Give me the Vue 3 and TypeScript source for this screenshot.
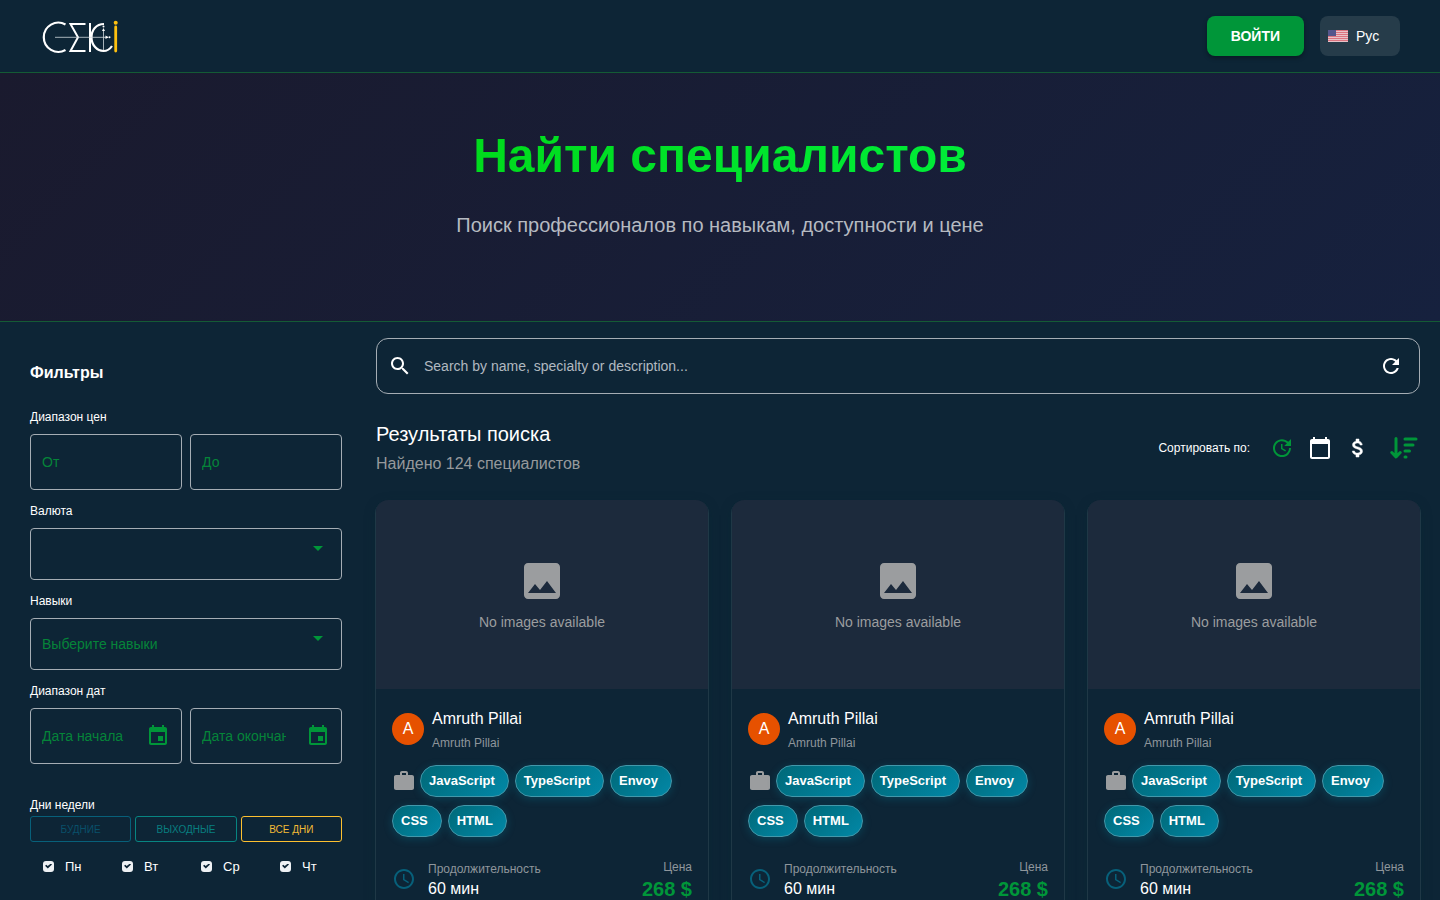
<script setup lang="ts">
import { ref } from 'vue'

interface Specialist {
  id: number
  name: string
  nick: string
  skills: string[]
  duration: string
  price: string
}

const skills = ['JavaScript', 'TypeScript', 'Envoy', 'CSS', 'HTML']
const specialists: Specialist[] = [1, 2, 3].map((id) => ({
  id,
  name: 'Amruth Pillai',
  nick: 'Amruth Pillai',
  skills,
  duration: '60 мин',
  price: '268 $',
}))

const days = ref(
  ['Пн', 'Вт', 'Ср', 'Чт', 'Пт', 'Сб', 'Вс'].map((name) => ({ name, on: true })),
)
const query = ref('')
const skill = ref('')
const currency = ref('')
const language = ref('ru')

function setDays(from: number, to: number) {
  days.value.forEach((day, i) => {
    day.on = i >= from && i <= to
  })
}
</script>

<template>
  <div class="page">
    <header class="topbar">
      <a href="#" class="logo" aria-label="CEKCi">
        <svg width="80" height="36" viewBox="40 18 80 36" fill="none">
          <g stroke="#fff" stroke-width="2.2">
            <path d="M65.500 24.500A14.600 14.600 0 1 0 65.500 50" />
            <path d="M85.500 24H70.500L78 37.300L70.500 51H85.500" stroke-width="2" />
            <path d="M90 23V52" stroke-width="2" />
            <path d="M104 24C96 24 91.500 30 91.500 37.500S97 51 103.500 51C107 51 110 49 112 46" />
          </g>
          <path d="M55 37.300H108M103.500 31V50" stroke="#cfd8dc" stroke-width=".8" />
          <path d="M102 31l1.500-3 1.500 3zM105.500 35.500l3 1.800-3 1.800z" fill="#fff" />
          <circle cx="103.500" cy="26.500" r="1" fill="#fff" />
          <circle cx="109.500" cy="37.300" r="1" fill="#fff" />
          <path d="M115.700 27V51" stroke="#fdc010" stroke-width="2.800" stroke-linecap="round" />
          <circle cx="115.700" cy="22.800" r="2" fill="#fdc010" />
        </svg>
      </a>
      <div class="topbar-actions">
        <button type="button" class="login">ВОЙТИ</button>
        <div class="language">
          <svg class="flag" width="20" height="12" viewBox="0 0 20 12" aria-hidden="true">
            <rect width="20" height="12" fill="#e9c3c9" />
            <path d="M0 .5h20M0 2.500h20M0 4.500h20M0 6.500h20M0 8.500h20M0 10.500h20" stroke="#dc7480" />
            <rect width="8" height="6" fill="#55568c" />
          </svg>
          <select v-model="language" aria-label="Язык">
            <option value="ru">Рус</option>
            <option value="en">Eng</option>
          </select>
        </div>
      </div>
    </header>

    <section class="hero">
      <h1>Найти специалистов</h1>
      <p>Поиск профессионалов по навыкам, доступности и цене</p>
    </section>

    <div class="content">
      <aside class="filters">
        <h2>Фильтры</h2>

        <label class="caption" for="price-from">Диапазон цен</label>
        <div class="pair">
          <div class="field"><input id="price-from" type="text" placeholder="От" /></div>
          <div class="field"><input type="text" placeholder="До" aria-label="Цена до" /></div>
        </div>

        <label class="caption" for="currency">Валюта</label>
        <div class="field select-field">
          <select id="currency" v-model="currency">
            <option value=""></option>
            <option value="usd">USD</option>
          </select>
          <svg class="caret" width="10" height="5" viewBox="0 0 10 5"><path d="M0 0h10L5 5z" /></svg>
        </div>

        <label class="caption" for="skills">Навыки</label>
        <div class="field select-field">
          <select id="skills" v-model="skill">
            <option value="">Выберите навыки</option>
            <option v-for="s in skills" :key="s" :value="s">{{ s }}</option>
          </select>
          <svg class="caret" width="10" height="5" viewBox="0 0 10 5"><path d="M0 0h10L5 5z" /></svg>
        </div>

        <label class="caption" for="date-from">Диапазон дат</label>
        <div class="pair">
          <div class="field date-field">
            <input id="date-from" type="text" placeholder="Дата начала" />
            <button type="button" class="icon-button" aria-label="Выбрать дату начала">
              <svg width="24" height="24" viewBox="0 0 24 24"><path d="M17 12h-5v5h5v-5zM16 1v2H8V1H6v2H5c-1.110 0-1.990.9-1.990 2L3 19c0 1.100.89 2 2 2h14c1.100 0 2-.9 2-2V5c0-1.100-.9-2-2-2h-1V1h-2zm3 18H5V8h14v11z" /></svg>
            </button>
          </div>
          <div class="field date-field">
            <input type="text" placeholder="Дата окончания" aria-label="Дата окончания" />
            <button type="button" class="icon-button" aria-label="Выбрать дату окончания">
              <svg width="24" height="24" viewBox="0 0 24 24"><path d="M17 12h-5v5h5v-5zM16 1v2H8V1H6v2H5c-1.110 0-1.990.9-1.990 2L3 19c0 1.100.89 2 2 2h14c1.100 0 2-.9 2-2V5c0-1.100-.9-2-2-2h-1V1h-2zm3 18H5V8h14v11z" /></svg>
            </button>
          </div>
        </div>

        <div class="days-title">Дни недели</div>
        <div class="day-presets">
          <button type="button" class="preset weekdays" @click="setDays(0, 4)">БУДНИЕ</button>
          <button type="button" class="preset weekend" @click="setDays(5, 6)">ВЫХОДНЫЕ</button>
          <button type="button" class="preset all" @click="setDays(0, 6)">ВСЕ ДНИ</button>
        </div>
        <div class="days">
          <label v-for="day in days" :key="day.name" class="day">
            <input v-model="day.on" type="checkbox" />
            <span>{{ day.name }}</span>
          </label>
        </div>
      </aside>

      <main class="results">
        <div class="search">
          <svg width="24" height="24" viewBox="0 0 24 24" aria-hidden="true"><path d="M15.500 14h-.79l-.28-.27C15.410 12.590 16 11.110 16 9.500 16 5.910 13.090 3 9.500 3S3 5.910 3 9.500 5.910 16 9.500 16c1.610 0 3.090-.59 4.230-1.570l.27.28v.79l5 4.990L20.490 19l-4.990-5zm-6 0C7.010 14 5 11.990 5 9.500S7.010 5 9.500 5 14 7.010 14 9.500 11.990 14 9.500 14z" /></svg>
          <input v-model="query" type="text" placeholder="Search by name, specialty or description..." aria-label="Search" />
          <button type="button" class="icon-button" aria-label="Обновить">
            <svg width="24" height="24" viewBox="0 0 24 24"><path d="M17.650 6.350C16.200 4.900 14.210 4 12 4c-4.420 0-7.990 3.580-7.990 8s3.570 8 7.990 8c3.730 0 6.840-2.550 7.730-6h-2.080c-.82 2.330-3.040 4-5.650 4-3.310 0-6-2.690-6-6s2.690-6 6-6c1.660 0 3.140.69 4.220 1.780L13 11h7V4l-2.350 2.350z" /></svg>
          </button>
        </div>

        <div class="results-head">
          <div>
            <h2>Результаты поиска</h2>
            <p>Найдено 124 специалистов</p>
          </div>
          <div class="sort">
            <span>Сортировать по:</span>
            <div class="sort-icons">
              <button type="button" class="icon-button green" aria-label="По обновлению">
                <svg width="24" height="24" viewBox="0 0 24 24"><path d="M21 10.120h-6.780l2.740-2.820c-2.730-2.700-7.150-2.800-9.880-.1-2.730 2.710-2.730 7.080 0 9.790s7.150 2.710 9.880 0C18.320 15.650 19 14.080 19 12.100h2c0 1.980-.88 4.550-2.640 6.290-3.510 3.480-9.210 3.480-12.720 0-3.500-3.470-3.530-9.110-.02-12.580s9.140-3.470 12.650 0L21 3v7.120zM12.500 8v4.250l3.500 2.080-.72 1.210L11 13V8h1.500z" /></svg>
              </button>
              <button type="button" class="icon-button" aria-label="По дате">
                <svg width="24" height="24" viewBox="0 0 24 24"><path d="M20 3h-1V1h-2v2H7V1H5v2H4c-1.100 0-2 .9-2 2v16c0 1.100.9 2 2 2h16c1.100 0 2-.9 2-2V5c0-1.100-.9-2-2-2zm0 18H4V8h16v13z" /></svg>
              </button>
              <button type="button" class="icon-button bold" aria-label="По цене">
                <svg width="24" height="24" viewBox="0 0 24 24"><path d="M11.800 10.900c-2.270-.59-3-1.200-3-2.150 0-1.090 1.010-1.850 2.700-1.850 1.780 0 2.440.85 2.500 2.100h2.210c-.07-1.720-1.120-3.300-3.210-3.810V3h-3v2.160c-1.940.42-3.500 1.680-3.500 3.610 0 2.310 1.910 3.460 4.700 4.130 2.500.6 3 1.480 3 2.410 0 .69-.49 1.790-2.700 1.790-2.060 0-2.870-.92-2.980-2.100h-2.200c.12 2.190 1.760 3.420 3.680 3.830V21h3v-2.150c1.950-.37 3.500-1.500 3.500-3.550 0-2.840-2.430-3.810-4.700-4.400z" /></svg>
              </button>
            </div>
            <button type="button" class="icon-button green" aria-label="Порядок сортировки">
              <svg class="sort-order" width="28" height="24" viewBox="0 0 28 24">
                <path d="M6 2.500V20M1.800 16.500L6 21l4.200-4.500M15 3h11M15 9h8M15 15h4.500M15 21h1" />
              </svg>
            </button>
          </div>
        </div>

        <div class="cards">
          <article v-for="person in specialists" :key="person.id" class="card">
            <div class="photo">
              <svg width="48" height="48" viewBox="0 0 24 24" aria-hidden="true"><path d="M21 19V5c0-1.100-.9-2-2-2H5c-1.100 0-2 .9-2 2v14c0 1.100.9 2 2 2h14c1.100 0 2-.9 2-2zM8.500 13.500l2.500 3.010L14.500 12l4.500 6H5l3.500-4.500z" /></svg>
              <span>No images available</span>
            </div>
            <div class="card-body">
              <div class="person">
                <div class="avatar">A</div>
                <div>
                  <h3>{{ person.name }}</h3>
                  <p>{{ person.nick }}</p>
                </div>
              </div>
              <div class="skills">
                <svg width="24" height="24" viewBox="0 0 24 24" aria-hidden="true"><path d="M20 6h-4V4c0-1.110-.89-2-2-2h-4c-1.110 0-2 .89-2 2v2H4c-1.110 0-1.990.89-1.990 2L2 19c0 1.110.89 2 2 2h16c1.110 0 2-.89 2-2V8c0-1.110-.89-2-2-2zm-6 0h-4V4h4v2z" /></svg>
                <span v-for="s in person.skills" :key="s" class="chip">{{ s }}</span>
              </div>
              <div class="terms">
                <svg width="24" height="24" viewBox="0 0 24 24" aria-hidden="true"><path d="M11.990 2C6.470 2 2 6.480 2 12s4.470 10 9.990 10C17.520 22 22 17.520 22 12S17.520 2 11.990 2zM12 20c-4.420 0-8-3.580-8-8s3.580-8 8-8 8 3.580 8 8-3.580 8-8 8zm.5-13H11v6l5.250 3.150.75-1.230-4.500-2.670z" /></svg>
                <div class="duration">
                  <span>Продолжительность</span>
                  <b>{{ person.duration }}</b>
                </div>
                <div class="price">
                  <span>Цена</span>
                  <b>{{ person.price }}</b>
                </div>
              </div>
            </div>
          </article>
        </div>
      </main>
    </div>
  </div>
</template>

<style>
html {
  background: #0d2536;
  scrollbar-width: none;
}

body {
  margin: 0;
}
</style>

<style scoped>
.page {
  min-height: 100vh;
  background: #0d2536;
  color: #fff;
  font-family: "Liberation Sans", Arial, sans-serif;
  font-size: 14px;
}

.page *,
.page *::before {
  box-sizing: border-box;
}

h1,
h2,
h3,
p {
  margin: 0;
}

button,
input,
select {
  font-family: inherit;
  color: inherit;
}

svg {
  flex: none;
  display: block;
  fill: currentColor;
}

.topbar {
  display: flex;
  align-items: center;
  justify-content: space-between;
  height: 73px;
  padding: 0 40px;
  border-bottom: 1px solid #145b35;
}

.logo svg {
  fill: none;
}

.topbar-actions {
  display: flex;
  gap: 16px;
}

.login {
  height: 40px;
  padding: 0 24px;
  border: 0;
  border-radius: 8px;
  background: #009639;
  box-shadow: 0 2px 4px rgba(0, 0, 0, 0.35);
  font-size: 14px;
  font-weight: 700;
}

.language {
  position: relative;
  width: 80px;
}

.language select {
  appearance: none;
  width: 100%;
  height: 40px;
  padding: 0 8px 0 36px;
  border: 0;
  border-radius: 8px;
  background: #263c4a;
  font-size: 14px;
}

.flag {
  position: absolute;
  top: 14px;
  left: 8px;
  pointer-events: none;
}

.hero {
  height: 249px;
  padding-top: 55px;
  border-bottom: 1px solid #145b35;
  background: linear-gradient(135deg, #1a1a2e 0%, #16213e 100%) padding-box;
  text-align: center;
}

.hero h1 {
  background: linear-gradient(135deg, #00c800 0%, #00ff55 100%);
  background-clip: text;
  color: transparent;
  font-size: 48px;
  line-height: 56px;
}

.hero p {
  margin-top: 24px;
  color: #b6bac1;
  font-size: 20px;
  line-height: 34px;
}

.content {
  display: grid;
  grid-template-columns: 332px minmax(0, 1fr);
  gap: 24px;
  padding: 16px 20px 24px;
}

.filters {
  padding: 22px 10px;
}

.filters h2 {
  margin-bottom: 22px;
  font-size: 16px;
  line-height: 26px;
}

.caption {
  display: block;
  margin: 12px 0 8px;
  font-size: 12px;
  line-height: 18px;
}

.pair {
  display: grid;
  grid-template-columns: repeat(2, minmax(0, 1fr));
  gap: 8px;
}

.field {
  position: relative;
  display: flex;
  align-items: center;
  height: 56px;
  padding: 0 11px;
  border: 1px solid #a5adb4;
  border-radius: 4px;
  color: #009639;
}

.date-field {
  gap: 20px;
}

.field input,
.field select {
  flex: 1;
  min-width: 0;
  height: 100%;
  padding: 0;
  border: 0;
  outline: 0;
  background: none;
  font-size: 14px;
}

.field input::placeholder {
  color: #058439;
  opacity: 1;
}

.select-field {
  height: 52px;
}

.select-field select {
  appearance: none;
  color: #058439;
}

.caret {
  position: absolute;
  top: 17px;
  right: 18px;
  pointer-events: none;
}

.icon-button {
  display: flex;
  flex: none;
  padding: 0;
  border: 0;
  background: none;
}

.bold svg {
  stroke: currentColor;
  stroke-width: 0.5;
}

.green {
  color: #009639;
}

.days-title {
  margin: 32px 0 2px;
  font-size: 12px;
  line-height: 18px;
}

.day-presets {
  display: grid;
  grid-template-columns: repeat(3, 1fr);
  gap: 4px;
}

.preset {
  height: 26px;
  padding: 0;
  border: 1px solid;
  border-radius: 3px;
  background: none;
  font-size: 10px;
}

.weekdays {
  border-color: #07607a;
  color: #09506a;
}

.weekend {
  border-color: #078582;
  color: #087f80;
}

.all {
  border-color: #fdc030;
  color: #f3bb35;
}

.days {
  display: grid;
  grid-template-columns: repeat(4, 1fr);
  gap: 15px 4px;
  margin-top: 12px;
}

.day {
  display: flex;
  align-items: center;
  gap: 11px;
  height: 24px;
  padding-left: 13px;
  font-size: 13px;
}

.day input {
  appearance: none;
  display: grid;
  place-items: center;
  width: 11px;
  height: 11px;
  margin: 0;
  border-radius: 3px;
  background: #eef1f4;
}

.day input:checked::before {
  content: "";
  width: 7px;
  height: 5px;
  background: #0d2536;
  clip-path: polygon(0 45%, 20% 25%, 38% 50%, 85% 0, 100% 20%, 40% 100%);
}

.search {
  display: flex;
  align-items: center;
  gap: 12px;
  height: 56px;
  padding: 0 16px 0 11px;
  border: 1px solid #a5adb4;
  border-radius: 12px;
}

.search input {
  flex: 1;
  min-width: 0;
  height: 100%;
  padding: 0;
  border: 0;
  outline: 0;
  background: none;
  font-size: 14px;
}

.search input::placeholder {
  color: #b1b9c0;
  opacity: 1;
}

.results-head {
  display: flex;
  align-items: center;
  justify-content: space-between;
  margin: 24px 0;
}

.results-head h2 {
  font-size: 20px;
  font-weight: 400;
  line-height: 32px;
}

.results-head p {
  margin-top: 2px;
  color: #96999c;
  font-size: 16px;
  line-height: 24px;
}

.sort {
  display: flex;
  align-items: center;
  gap: 20px;
  padding: 2px 2px 0 0;
  font-size: 12px;
}

.sort-icons {
  display: flex;
  gap: 14px;
}

.sort-order {
  fill: none;
  stroke: currentColor;
  stroke-width: 3;
  stroke-linecap: round;
  stroke-linejoin: round;
}

.cards {
  display: grid;
  grid-template-columns: repeat(3, minmax(0, 1fr));
  gap: 24px;
}

.card {
  overflow: hidden;
  border-radius: 12px;
  box-shadow: 1px 1px 0 #1f3846, -1px 1px 0 #1f3846, 0 4px 12px rgba(0, 40, 50, 0.4);
  background: #0d2536;
}

.photo {
  display: flex;
  flex-direction: column;
  align-items: center;
  justify-content: center;
  gap: 6px;
  height: 189px;
  background: #1c2a3c;
  color: #9b9d9f;
}

.photo span {
  line-height: 22px;
}

.card-body {
  padding: 16px;
}

.person {
  display: flex;
  align-items: center;
  gap: 8px;
}

.avatar {
  display: grid;
  place-items: center;
  width: 32px;
  height: 32px;
  border-radius: 50%;
  background: #e65100;
  font-size: 16px;
}

.person h3 {
  font-size: 16px;
  font-weight: 400;
  line-height: 28px;
}

.person p {
  color: #8f969c;
  font-size: 12px;
  line-height: 20px;
}

.skills {
  display: flex;
  flex-wrap: wrap;
  align-items: center;
  gap: 8px 4px;
  margin-top: 12px;
  color: #9b9d9f;
}

.chip {
  height: 32px;
  margin-right: 2px;
  padding: 0 13px 0 8px;
  border: 1px solid #4398aa;
  border-radius: 16px;
  background: linear-gradient(135deg, #006978, #0288a7);
  box-shadow: 0 2px 8px rgba(0, 131, 160, 0.3);
  color: #fff;
  font-size: 13px;
  font-weight: 700;
  line-height: 29px;
}

.terms {
  display: flex;
  align-items: center;
  gap: 12px;
  margin-top: 20px;
  color: #07607a;
}

.terms span {
  display: block;
  color: #8f969c;
  font-size: 12px;
  line-height: 20px;
}

.duration b {
  display: block;
  color: #fff;
  font-size: 16px;
  font-weight: 400;
  line-height: 20px;
}

.price {
  margin-left: auto;
  text-align: right;
}

.price b {
  display: block;
  color: #009639;
  font-size: 20px;
  line-height: 24px;
}
</style>
